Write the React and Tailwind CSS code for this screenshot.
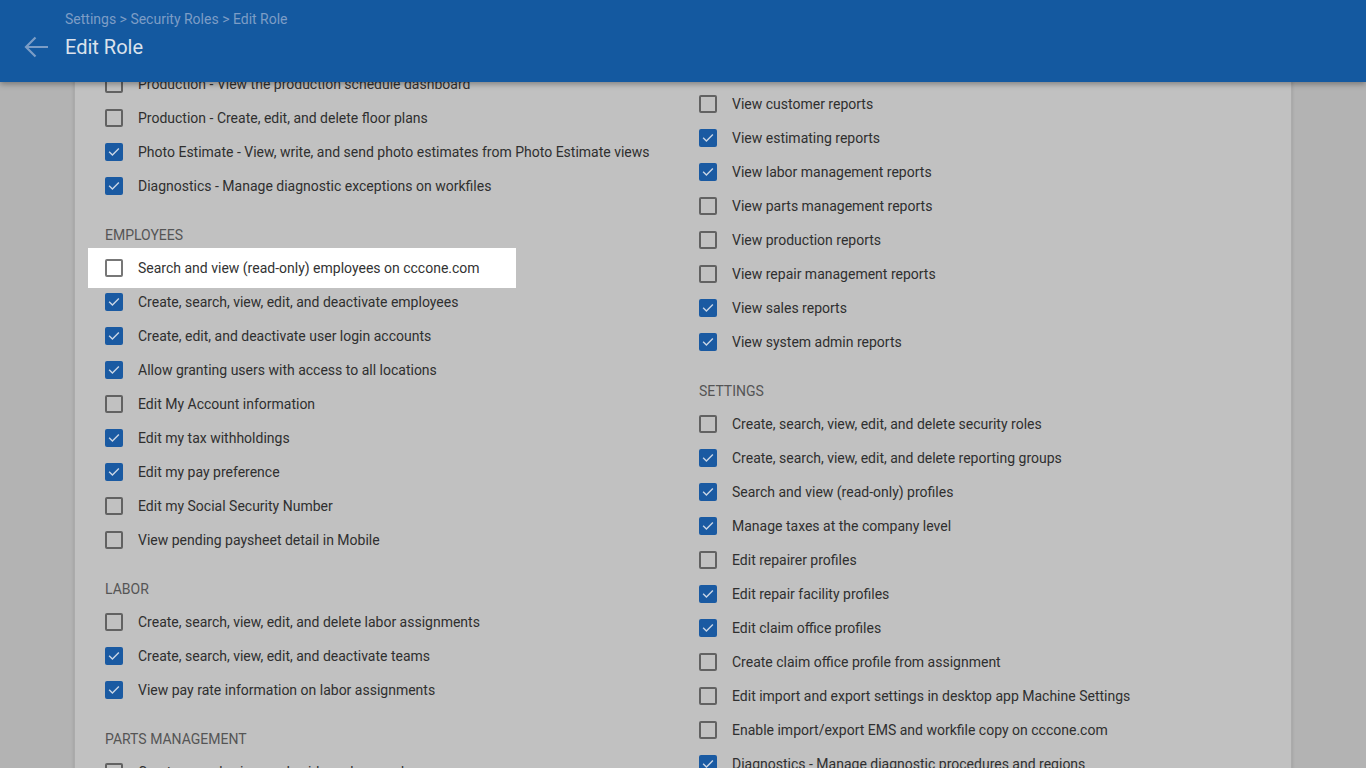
import React from "react";

function Box({ checked, bright }) {
  if (checked) {
    return (
      <span className="flex h-[18px] w-[18px] shrink-0 items-center justify-center rounded-[2px] bg-[#1a5aa2]">
        <svg width="14" height="14" viewBox="0 0 24 24" fill="none">
          <path d="M4.5 12.5l4.8 4.8L19.5 7" stroke="#c9d5e5" strokeWidth="2.4" strokeLinecap="square" />
        </svg>
      </span>
    );
  }
  return (
    <span
      className={
        "block h-[18px] w-[18px] shrink-0 rounded-[2px] border-2 " +
        (bright ? "border-[#777777]" : "border-[#626262]")
      }
    />
  );
}

function Row({ label, checked, highlight }) {
  if (highlight) {
    return (
      <div className="-mx-[17px] -my-[3px] flex h-[40px] w-[428px] items-center gap-[15px] bg-white px-[17px]">
        <Box checked={checked} bright />
        <span className="text-[14px] text-[#333333]">{label}</span>
      </div>
    );
  }
  return (
    <div className="flex h-[34px] items-center gap-[15px]">
      <Box checked={checked} />
      <span className="text-[14px] text-[#2f2f2f]">{label}</span>
    </div>
  );
}

function Section({ title, rows }) {
  return (
    <div>
      {title ? (
        <div className="pt-[22px] pb-[6px] text-[14px] leading-[20px] uppercase text-[#555555]">{title}</div>
      ) : null}
      {rows.map((r, i) => (
        <Row key={i} label={r[0]} checked={r[1]} highlight={r[2]} />
      ))}
    </div>
  );
}

const left = [
  {
    title: "",
    rows: [
      ["Production - View the production schedule dashboard", false],
      ["Production - Create, edit, and delete floor plans", false],
      ["Photo Estimate - View, write, and send photo estimates from Photo Estimate views", true],
      ["Diagnostics - Manage diagnostic exceptions on workfiles", true],
    ],
  },
  {
    title: "Employees",
    rows: [
      ["Search and view (read-only) employees on cccone.com", false, true],
      ["Create, search, view, edit, and deactivate employees", true],
      ["Create, edit, and deactivate user login accounts", true],
      ["Allow granting users with access to all locations", true],
      ["Edit My Account information", false],
      ["Edit my tax withholdings", true],
      ["Edit my pay preference", true],
      ["Edit my Social Security Number", false],
      ["View pending paysheet detail in Mobile", false],
    ],
  },
  {
    title: "Labor",
    rows: [
      ["Create, search, view, edit, and delete labor assignments", false],
      ["Create, search, view, edit, and deactivate teams", true],
      ["View pay rate information on labor assignments", true],
    ],
  },
  {
    title: "Parts Management",
    rows: [["Create, search, view, and void purchase orders", false]],
  },
];

const right = [
  {
    title: "",
    rows: [
      ["View customer reports", false],
      ["View estimating reports", true],
      ["View labor management reports", true],
      ["View parts management reports", false],
      ["View production reports", false],
      ["View repair management reports", false],
      ["View sales reports", true],
      ["View system admin reports", true],
    ],
  },
  {
    title: "Settings",
    rows: [
      ["Create, search, view, edit, and delete security roles", false],
      ["Create, search, view, edit, and delete reporting groups", true],
      ["Search and view (read-only) profiles", true],
      ["Manage taxes at the company level", true],
      ["Edit repairer profiles", false],
      ["Edit repair facility profiles", true],
      ["Edit claim office profiles", true],
      ["Create claim office profile from assignment", false],
      ["Edit import and export settings in desktop app Machine Settings", false],
      ["Enable import/export EMS and workfile copy on cccone.com", false],
      ["Diagnostics - Manage diagnostic procedures and regions", true],
    ],
  },
];

export default function App() {
  return (
    <div
      className="flex h-[768px] w-[1366px] flex-col overflow-hidden bg-[#b3b3b3]"
      style={{ fontFamily: "Roboto, 'Noto Sans', Arial, sans-serif" }}
    >
      <header className="relative z-10 flex h-[82px] shrink-0 items-start bg-[#1459a0] shadow-[0_2px_6px_rgba(0,0,0,0.35)]">
        <div className="flex h-[82px] w-[65px] shrink-0 items-start pt-[35px] pl-[23px]">
          <svg width="26" height="24" viewBox="0 0 26 24" fill="none">
            <path d="M25 12H3M12.5 2.5L3 12l9.5 9.5" stroke="#7b9dc6" strokeWidth="2.2" />
          </svg>
        </div>
        <div className="flex flex-col">
          <div className="pt-[10px] text-[14px] leading-[18px] text-[#7d9dc6]">
            Settings &gt; Security Roles &gt; Edit Role
          </div>
          <div className="pt-[6px] text-[20px] leading-[26px] text-[#dbe2ec]">Edit Role</div>
        </div>
      </header>
      <main className="relative min-h-0 flex-1 overflow-hidden">
        <div className="mx-[74px] -mt-[15px] w-[1218px] border-x border-[#ababab] bg-[#c1c1c1] pl-[30px] shadow-[0_0_3px_rgba(0,0,0,0.15)]">
          <div className="grid grid-cols-[594px_1fr]">
            <div>
              {left.map((s, i) => (
                <Section key={i} title={s.title} rows={s.rows} />
              ))}
            </div>
            <div className="pt-[20px]">
              {right.map((s, i) => (
                <Section key={i} title={s.title} rows={s.rows} />
              ))}
            </div>
          </div>
        </div>
      </main>
    </div>
  );
}
